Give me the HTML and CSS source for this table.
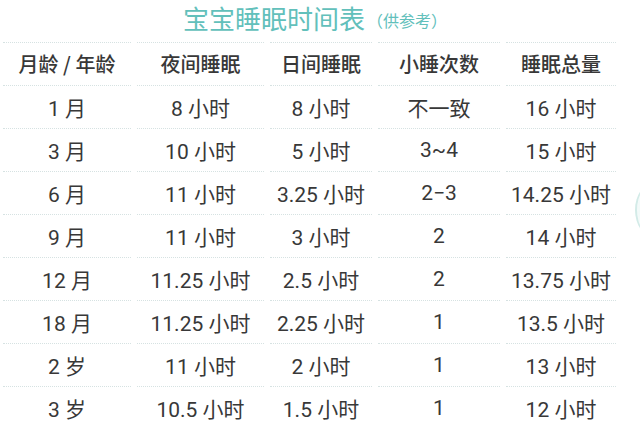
FILE: index.html
```html
<!DOCTYPE html>
<html lang="zh">
<head>
<meta charset="utf-8">
<link rel="stylesheet" href="styles.css">
</head>
<body>
<div class="page">
  <h1 class="title">宝宝睡眠时间表<span class="note">（供参考）</span></h1>
  <div class="table">
    <div class="row head"><div>月龄 / 年龄</div><div>夜间睡眠</div><div>日间睡眠</div><div>小睡次数</div><div>睡眠总量</div></div>
    <div class="row"><div>1 月</div><div>8 小时</div><div>8 小时</div><div>不一致</div><div>16 小时</div></div>
    <div class="row"><div>3 月</div><div>10 小时</div><div>5 小时</div><div>3~4</div><div>15 小时</div></div>
    <div class="row"><div>6 月</div><div>11 小时</div><div>3.25 小时</div><div>2−3</div><div>14.25 小时</div></div>
    <div class="row"><div>9 月</div><div>11 小时</div><div>3 小时</div><div>2</div><div>14 小时</div></div>
    <div class="row"><div>12 月</div><div>11.25 小时</div><div>2.5 小时</div><div>2</div><div>13.75 小时</div></div>
    <div class="row"><div>18 月</div><div>11.25 小时</div><div>2.25 小时</div><div>1</div><div>13.5 小时</div></div>
    <div class="row"><div>2 岁</div><div>11 小时</div><div>2 小时</div><div>1</div><div>13 小时</div></div>
    <div class="row"><div>3 岁</div><div>10.5 小时</div><div>1.5 小时</div><div>1</div><div>12 小时</div></div>
  </div>
  <div class="edge"></div>
</div>
</body>
</html>
```
FILE: styles.css
```css
html, body {
  margin: 0;
  padding: 0;
  background: #ffffff;
}
.page {
  position: relative;
  width: 640px;
  height: 426px;
  overflow: hidden;
  font-family: Roboto, "Noto Sans CJK SC", sans-serif;
  color: #383838;
}
.title {
  margin: 0;
  height: 42px;
  box-sizing: border-box;
  padding: 0 10px 6px 0;
  display: flex;
  justify-content: center;
  align-items: center;
  font-family: "Noto Sans CJK SC", sans-serif;
  font-weight: 400;
  font-size: 26px;
  line-height: 36px;
  color: #62c0bb;
}
.note {
  font-size: 16px;
  line-height: 36px;
  padding-top: 3px;
  margin-left: 2px;
}
.table {
  display: flex;
  flex-direction: column;
}
.row {
  display: grid;
  grid-template-columns: 134px 133px 108px 128px 116px;
  height: 43px;
}
.row > div {
  display: flex;
  align-items: center;
  justify-content: center;
  font-size: 21px;
  white-space: nowrap;
  margin: 0 3px;
  border-top: 1px dotted #d6e2e2;
}
.head > div {
  font-family: "Noto Sans CJK SC", sans-serif;
  font-weight: 500;
  font-size: 20px;
  padding-bottom: 2px;
}
.edge {
  position: absolute;
  left: 635px;
  top: 182px;
  width: 40px;
  height: 56px;
  border-radius: 50%;
  background: radial-gradient(circle at 80% 50%, #e2f2f1 0%, #eef8f7 60%, #ffffff 100%);
  border-left: 2px solid #d3ebe8;
}
```
